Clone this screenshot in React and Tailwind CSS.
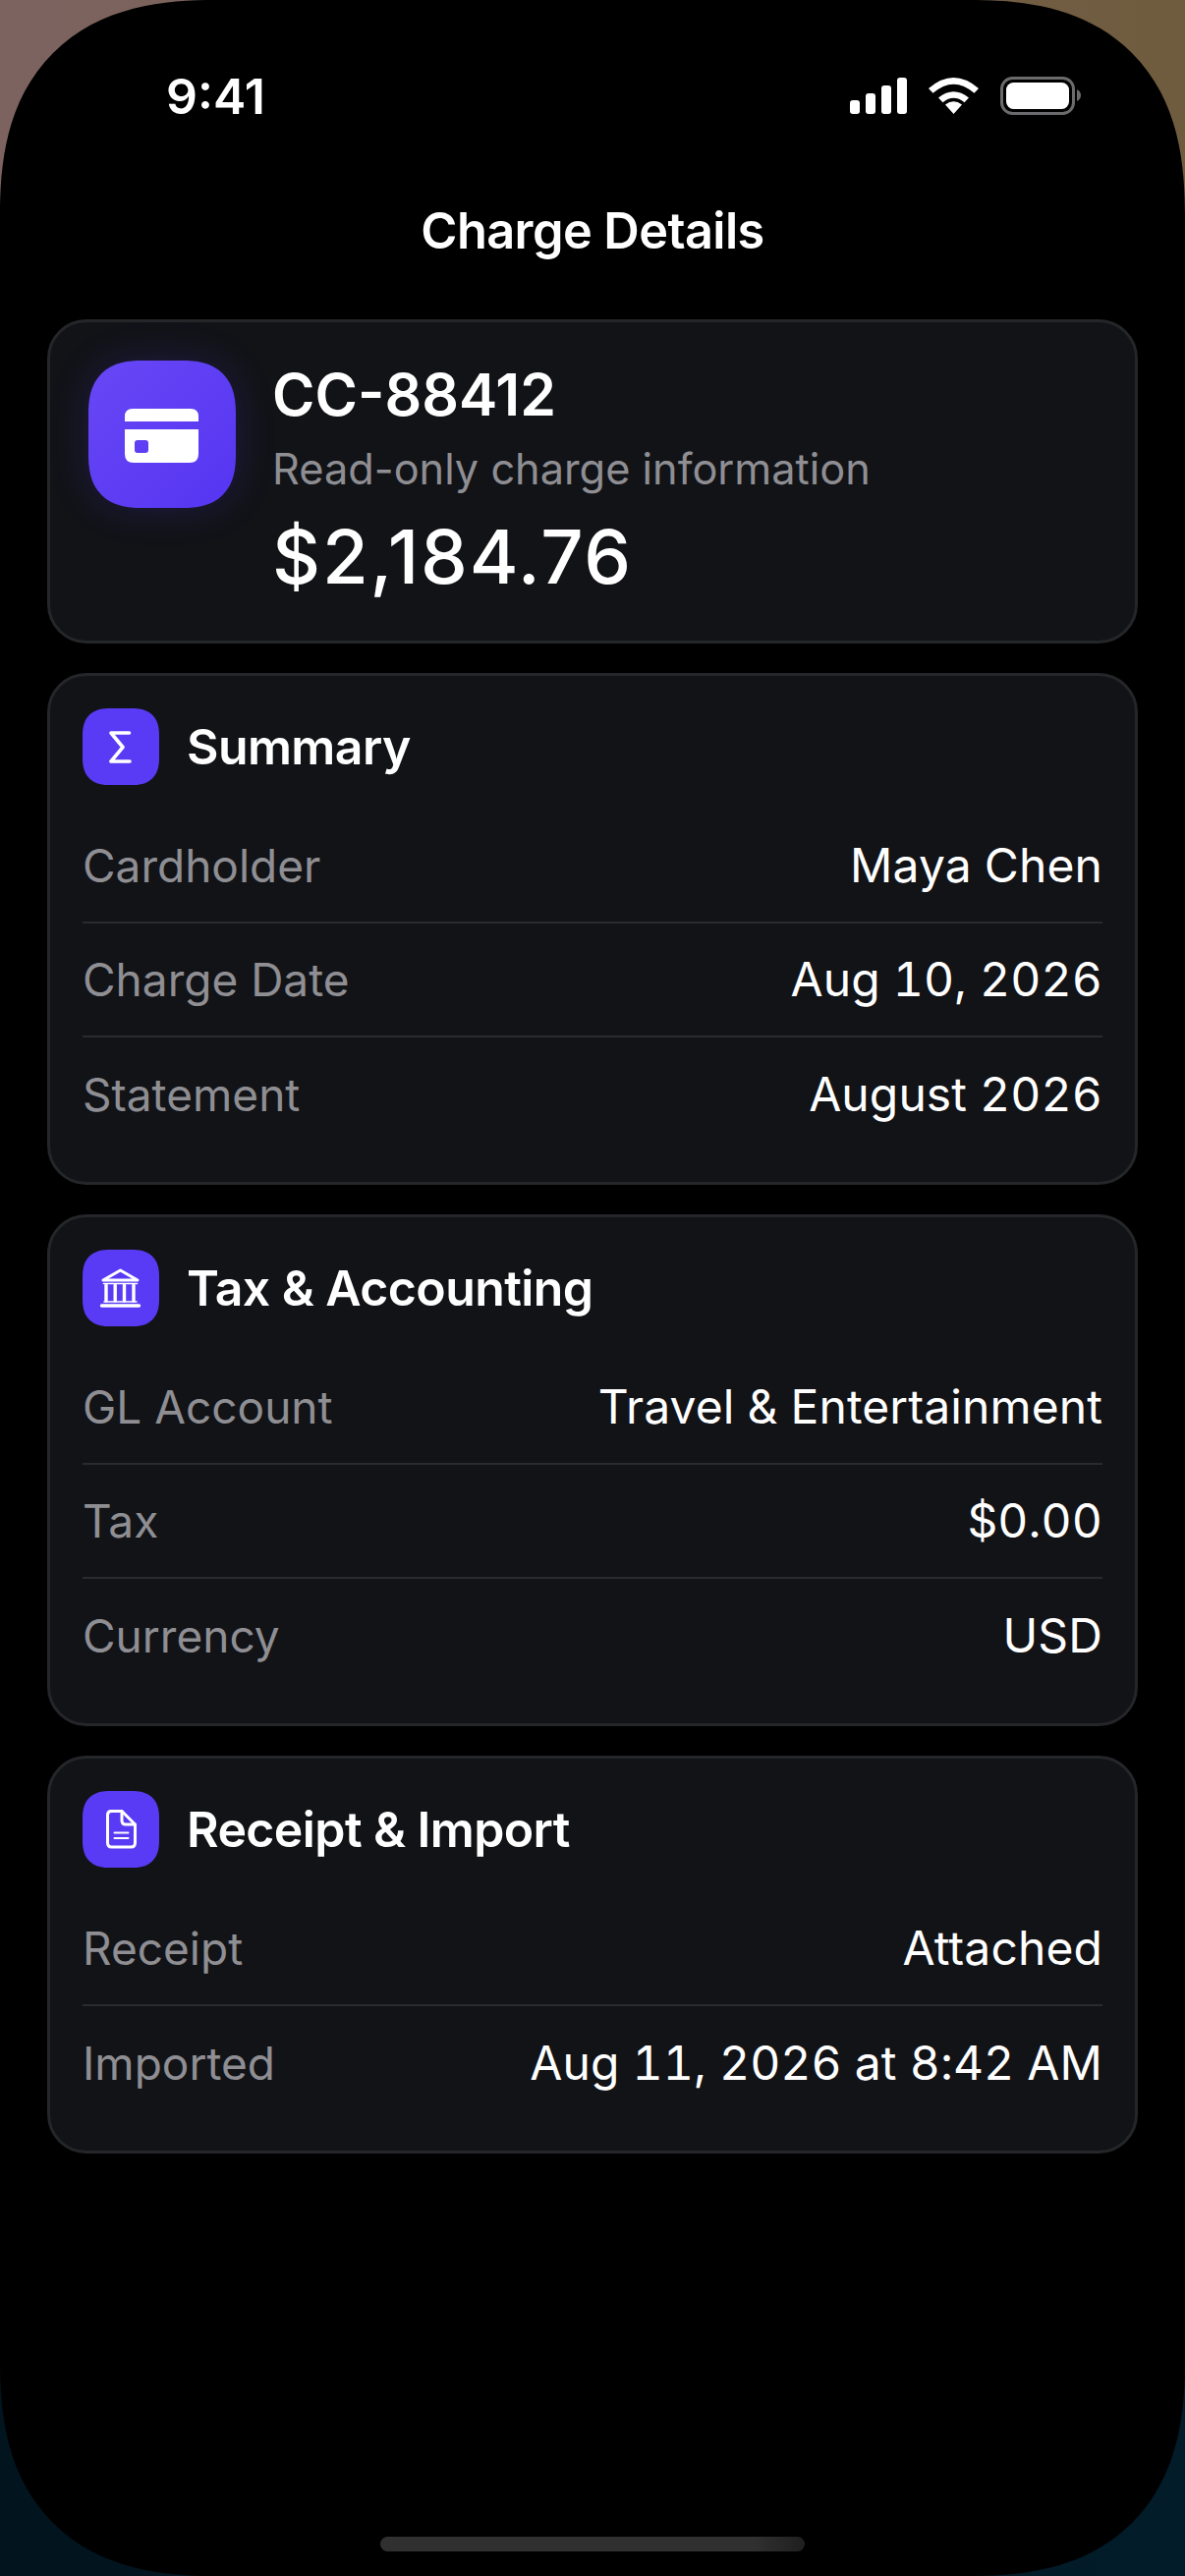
const SUMMARY = [
  ['Cardholder', 'Maya Chen'],
  ['Charge Date', 'Aug 10, 2026'],
  ['Statement', 'August 2026'],
];
const TAX = [
  ['GL Account', 'Travel & Entertainment'],
  ['Tax', '$0.00'],
  ['Currency', 'USD'],
];
const RECEIPT = [
  ['Receipt', 'Attached'],
  ['Imported', 'Aug 11, 2026 at 8:42 AM'],
];

function StatusIcons() {
  return (
    <svg width="236" height="40" viewBox="864 78 236 40" className="block">
      <rect x="865" y="102" width="10" height="14" rx="3" fill="#fff" />
      <rect x="881" y="95" width="10" height="21" rx="3" fill="#fff" />
      <rect x="897" y="87" width="10" height="29" rx="3" fill="#fff" />
      <rect x="913" y="79" width="10" height="37" rx="3" fill="#fff" />
      <path d="M970.5 116 L962 106.5 Q970.5 100 979 106.5 Z" fill="#fff" />
      <path d="M955 99.5 Q970.5 87 986 99.5 L981.5 104.2 Q970.5 95.5 959.5 104.2 Z" fill="#fff" />
      <path d="M945 90 Q970.5 68 996 90 L991.5 94.8 Q970.5 76.5 949.5 94.8 Z" fill="#fff" />
      <rect x="1019.5" y="79.5" width="73" height="36" rx="11" fill="none" stroke="#6b6b6d" strokeWidth="3" />
      <rect x="1024" y="84" width="64" height="27" rx="7.5" fill="#fff" />
      <path d="M1096 91 Q1100 93 1100 97 Q1100 101 1096 103 Z" fill="#6b6b6d" />
    </svg>
  );
}

function CardIcon() {
  return (
    <svg width="148" height="148" viewBox="0 0 148 148">
      <path
        fillRule="evenodd"
        fill="#fff"
        d="M36 61 V56 Q36 48 44 48 H103 Q111 48 111 56 V61 Z M36 69 H111 V94 Q111 103 102 103 H45 Q36 103 36 94 Z M49 80 Q46 80 46 83 V90 Q46 93 49 93 H57 Q60 93 60 90 V83 Q60 80 57 80 Z"
      />
    </svg>
  );
}

function SigmaIcon() {
  return (
    <svg width="78" height="78" viewBox="0 0 78 78" fill="none" stroke="#fff" strokeWidth="3.6" strokeLinecap="round" strokeLinejoin="round">
      <path d="M47.5 25 H29 L41 39.5 L29 54 H48" />
    </svg>
  );
}

function BankIcon() {
  return (
    <svg width="78" height="78" viewBox="0 0 78 78" fill="none" stroke="#fff" strokeLinecap="round" strokeLinejoin="round">
      <path d="M21 31 L38.500 21 L56 31 Z" strokeWidth="3" />
      <path d="M24 36 V52 M33.200 36 V52 M42.500 36 V52 M52 36 V52" strokeWidth="3.400" />
      <path d="M21.500 34.500 H55.500 M22 53 H55" strokeWidth="1.600" />
      <path d="M19.500 57 H57.500" strokeWidth="3.400" />
    </svg>
  );
}

function DocIcon() {
  return (
    <svg width="78" height="78" viewBox="0 0 78 78" fill="none" stroke="#fff" strokeLinejoin="round" strokeLinecap="round">
      <path d="M29 20.500 H40 L53.500 34 V52.500 Q53.500 57 49.500 57 H29.500 Q25.500 57 25.500 52.500 V24.500 Q25.500 20.500 29 20.500 Z" strokeWidth="3" />
      <path d="M40 20.500 V30 Q40 34 44 34 H53.500" strokeWidth="3" />
      <path d="M32.500 42.500 H46.500 M32.500 48 H46.500" strokeWidth="2" />
    </svg>
  );
}

function Section({ icon, title, rows }) {
  return (
    <section className="mt-[30px] rounded-[40px] border-[3px] border-[#25262a] bg-[#121317] px-[33px] pt-[33px] pb-[31px]">
      <div className="flex items-center gap-[28px] pb-[25px]">
        <div className="flex h-[78px] w-[78px] items-center justify-center rounded-[28px] bg-[#5a3bf5] [corner-shape:superellipse(1.3)]">{icon}</div>
        <h2 className="text-[50px] leading-[78px] font-semibold tracking-[-0.6px] text-white">{title}</h2>
      </div>
      {rows.map(([label, value], i) => (
        <div
          key={label}
          className={`flex h-[116px] items-center justify-between ${i < rows.length - 1 ? 'border-b-2 border-[#2a2b2f]' : ''}`}
        >
          <span className="text-[46px] text-[#8e8e93]">{label}</span>
          <span className="text-[48px] tracking-[0.1px] text-white tabular-nums">{value}</span>
        </div>
      ))}
    </section>
  );
}

export default function App() {
  return (
    <div className="h-[2622px] w-[1206px] bg-[linear-gradient(to_right,#02141e,#021c2a),linear-gradient(to_right,#7d6360,#6f5c3e)] bg-[length:100%_50%] bg-[position:bottom,top] bg-no-repeat font-['Inter',sans-serif]">
      <main className="flex h-full flex-col rounded-[220px] bg-black px-[48px] [corner-shape:superellipse(1.3)]">
        <header className="flex items-center justify-between pt-[78px] pr-[58px] pl-[121px]">
          <span className="text-[50px] leading-[40px] font-semibold text-white">9:41</span>
          <StatusIcons />
        </header>

        <h1 className="mt-[90px] text-center text-[50.5px] leading-[54px] font-semibold tracking-[-0.6px] text-white">Charge Details</h1>

        <section className="mt-[63px] flex h-[330px] gap-[37px] rounded-[40px] border-[3px] border-[#25262a] bg-[#121317] pt-[39px] pl-[39px]">
          <div className="flex h-[150px] w-[150px] items-center justify-center rounded-[54px] bg-[linear-gradient(135deg,#6747f5,#5635f2)] shadow-[0_0_40px_rgba(90,59,245,0.2)] [corner-shape:superellipse(1.3)]">
            <CardIcon />
          </div>
          <div>
            <div className="text-[59px] leading-[70px] font-semibold text-white">CC-88412</div>
            <div className="mt-[13px] text-[43.3px] leading-[54px] text-[#8e8e93]">Read-only charge information</div>
            <div className="mt-[17px] text-[76px] leading-[90px] font-medium tracking-[1.8px] text-white">$2,184.76</div>
          </div>
        </section>

        <Section icon={<SigmaIcon />} title="Summary" rows={SUMMARY} />
        <Section icon={<BankIcon />} title="Tax & Accounting" rows={TAX} />
        <Section icon={<DocIcon />} title="Receipt & Import" rows={RECEIPT} />

        <div className="mt-auto mb-[25px] h-[15px] w-[432px] self-center rounded-full bg-[linear-gradient(to_right,#303030,#303030_88%,#1f1f1f)]" />
      </main>
    </div>
  );
}
